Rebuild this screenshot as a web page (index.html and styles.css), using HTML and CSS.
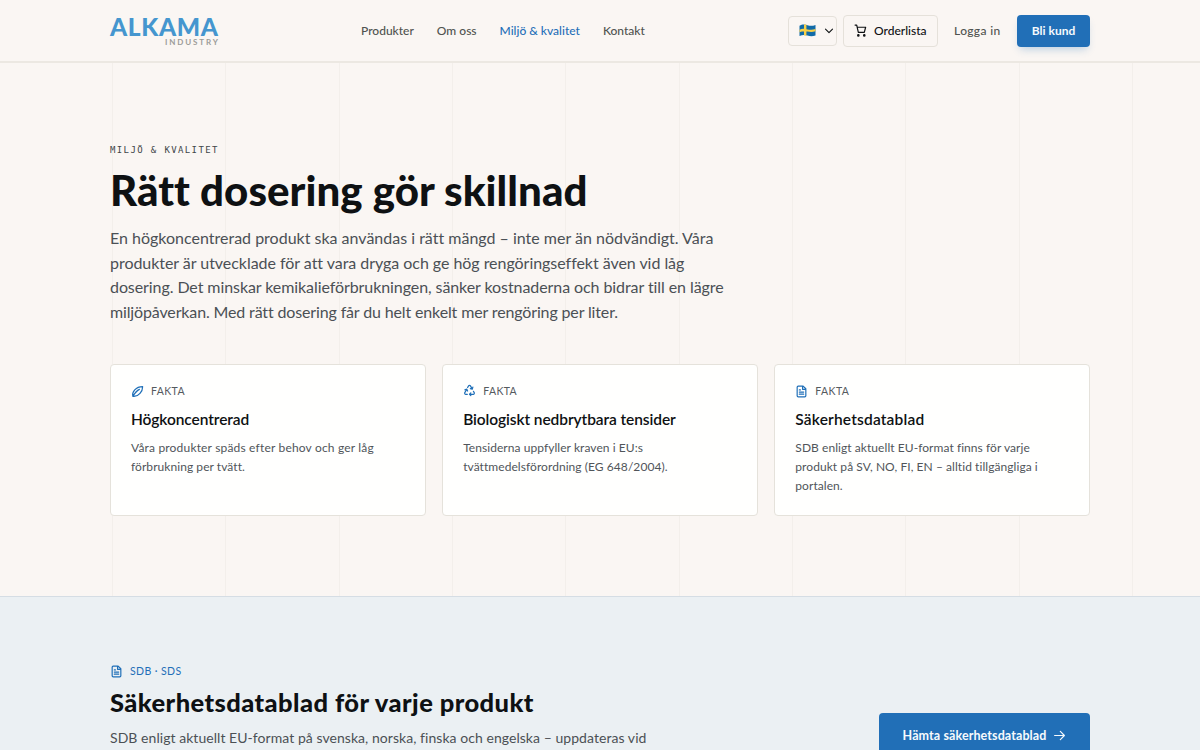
FILE: index.html
```html
<!DOCTYPE html>
<html lang="sv">

<head>
    <meta charset="utf-8">
    <title>Alkama Industry - Miljö & kvalitet</title>
    <link rel="stylesheet" href="styles.css">
</head>

<body>
    <header class="header">
        <div class="container header-inner">
            <a class="logo">
                <svg width="109" height="32" viewBox="0 0 109 32">
                    <text class="logo-name" x="0" y="20.500" textLength="108">ALKAMA</text>
                    <text class="logo-sub" x="55" y="29.500" textLength="53">INDUSTRY</text>
                </svg>
            </a>
            <nav class="nav">
                <a>Produkter</a>
                <a>Om oss</a>
                <a class="active">Miljö &amp; kvalitet</a>
                <a>Kontakt</a>
            </nav>
            <div class="actions">
                <button class="lang">
                    <svg width="17" height="13" viewBox="0 0 17 13">
                        <path d="M.5 1.8C3.5-.1 6 .6 8.5 1.3s5 .8 8-.3v10.4c-3 1.2-5.5.9-8 .2s-5-.9-8 .5z" fill="#116ba8" />
                        <path d="M5 .5h2.4v11H5zM.5 5.7C3.5 4.2 6 4.9 8.5 5.4s5 .7 8-.3v2.2c-3 1-5.5.8-8 .3s-5-.8-8 .6z" fill="#f7d048" />
                    </svg>
                    <svg class="icon" width="10" height="10" viewBox="0 0 10 10"><path d="M1.5 3.2 5 6.7l3.5-3.5" /></svg>
                </button>
                <button class="order">
                    <svg class="icon" width="13" height="13" viewBox="0 0 24 24"><circle cx="8" cy="21" r="1.3" /><circle cx="19" cy="21" r="1.3" /><path d="M2 2h3l3 13.5h11L21.5 6H6" /></svg>
                    <span>Orderlista</span>
                </button>
                <a class="login">Logga in</a>
                <a class="btn btn-small">Bli kund</a>
            </div>
        </div>
    </header>

    <section class="hero">
        <div class="container">
            <div class="eyebrow">MILJÖ &amp; KVALITET</div>
            <h1>Rätt dosering gör skillnad</h1>
            <p class="lead">
                En högkoncentrerad produkt ska användas i rätt mängd – inte mer än nödvändigt. Våra<br>
                <span class="snug">produkter är utvecklade för att vara dryga och ge hög rengöringseffekt även vid låg</span><br>
                <span class="tight">dosering. Det minskar kemikalieförbrukningen, sänker kostnaderna och bidrar till en lägre</span><br>
                <span class="tighter">miljöpåverkan. Med rätt dosering får du helt enkelt mer rengöring per liter.</span>
            </p>
            <div class="cards">
                <article class="card">
                    <div class="label">
                        <svg class="icon" width="13" height="13" viewBox="0 0 24 24"><path d="M3.5 21C1 13 9 3 21.5 3c0 8-7 19.5-18 18zM3.5 21C7 15 11 10 15.5 8" /></svg>
                        <span>FAKTA</span>
                    </div>
                    <h3>Högkoncentrerad</h3>
                    <p><span class="wide">Våra produkter späds efter behov och ger låg</span><br>förbrukning per tvätt.</p>
                </article>
                <article class="card">
                    <div class="label">
                        <svg class="icon icon-up" width="13" height="13" viewBox="0 0 24 24"><path d="M8 19H5a2 2 0 0 1-1.7-3L6.5 10.5M12 19h7a2 2 0 0 0 1.7-3l-1.5-2.500M14.5 16.5 12 19l2.5 2.5M8.5 13 7 9.5l-3.5 1.2M8.5 6.5l1.8-3a2 2 0 0 1 3.4 0l3.5 6M13.5 8.5l3.7 1 1-3.6" /></svg>
                        <span>FAKTA</span>
                    </div>
                    <h3>Biologiskt nedbrytbara tensider</h3>
                    <p>Tensiderna uppfyller kraven i EU:s<br>tvättmedelsförordning (EG 648/2004).</p>
                </article>
                <article class="card">
                    <div class="label">
                        <svg class="icon" width="13" height="13" viewBox="0 0 24 24"><path d="M15 2H6a2 2 0 0 0-2 2v16a2 2 0 0 0 2 2h12a2 2 0 0 0 2-2V7zM14 2v6h6M8 9h2M8 13h8M8 17h8" /></svg>
                        <span>FAKTA</span>
                    </div>
                    <h3 class="wide">Säkerhetsdatablad</h3>
                    <p>SDB enligt aktuellt EU-format finns för varje<br>produkt på SV, NO, FI, EN – alltid tillgängliga i<br>portalen.</p>
                </article>
            </div>
        </div>
    </section>

    <section class="sds">
        <div class="container sds-inner">
            <div>
                <div class="label label-blue">
                    <svg class="icon" width="13" height="13" viewBox="0 0 24 24"><path d="M15 2H6a2 2 0 0 0-2 2v16a2 2 0 0 0 2 2h12a2 2 0 0 0 2-2V7zM14 2v6h6M8 9h2M8 13h8M8 17h8" /></svg>
                    <span>SDB · SDS</span>
                </div>
                <h2>Säkerhetsdatablad för varje produkt</h2>
                <p class="sds-text">SDB enligt aktuellt EU-format på svenska, norska, finska och engelska – uppdateras vid</p>
            </div>
            <a class="btn btn-large">
                <span>Hämta säkerhetsdatablad</span>
                <svg class="icon" width="13" height="13" viewBox="0 0 24 24"><path d="M3 12h18M13.5 4.5 21 12l-7.5 7.5" /></svg>
            </a>
        </div>
    </section>
</body>

</html>
```
FILE: styles.css
```css
* {
    box-sizing: border-box;
}

body {
    margin: 0;
    height: 750px;
    overflow: hidden;
    background-color: #faf6f3;
    color: #0e1113;
    font-family: Lato, "Open Sans", sans-serif;
    font-variant-ligatures: none;
}

.container {
    width: 980px;
    margin: 0 auto;
}

.header {
    height: 63px;
    border-bottom: 2px solid #ece8e2;
}

.header-inner {
    display: flex;
    align-items: center;
    height: 61px;
}

.logo {
    width: 251px;
    height: 32px;
}

.logo svg {
    display: block;
    overflow: visible;
}

.logo-name {
    fill: #4596cf;
    font-size: 24.5px;
    font-weight: 900;
}

.logo-sub {
    fill: #9c9c98;
    font-size: 8px;
    font-weight: 700;
}

.nav {
    display: flex;
    gap: 23px;
    color: #50534f;
    font-size: 12px;
    font-weight: 500;
    white-space: nowrap;
}

.active {
    color: #1f6fb8;
}

.actions {
    display: flex;
    align-items: center;
    margin-left: auto;
    font-size: 12px;
    font-weight: 500;
    white-space: nowrap;
}

.lang,
.order {
    display: flex;
    align-items: center;
    background: none;
    border: 1px solid #e5e1da;
    border-radius: 4px;
    font: inherit;
    color: #0e1113;
}

.lang {
    width: 49px;
    height: 30px;
    margin-right: 6px;
    padding: 0 2px 0 10px;
    justify-content: space-between;
}

.order {
    width: 95px;
    height: 32px;
    margin-right: 16px;
    padding: 0 0 0 10px;
    gap: 7px;
}

.login {
    width: 63px;
    letter-spacing: 0.35px;
    color: #50534f;
}

.icon {
    display: block;
    flex: none;
    fill: none;
    stroke: currentColor;
    stroke-width: 2.2;
    stroke-linecap: round;
    stroke-linejoin: round;
}

.icon-up {
    margin-bottom: 2px;
}

.lang .icon {
    stroke-width: 1.1;
}

.btn {
    display: flex;
    align-items: center;
    justify-content: center;
    background-color: #216fb7;
    border-radius: 4px;
    color: #f6fafd;
    font-weight: 700;
}

.btn-small {
    width: 73px;
    height: 32px;
    box-shadow: 0 5px 9px -3px rgba(33, 111, 183, 0.3);
}

.hero {
    height: 533px;
    padding-top: 80px;
    background: repeating-linear-gradient(90deg, #f3efeb 0 1px, transparent 1px 113.35px) 112px 0 no-repeat;
}

.eyebrow {
    height: 14px;
    font-family: "DejaVu Sans Mono", monospace;
    font-size: 9px;
    line-height: 14px;
    letter-spacing: 1.38px;
    color: #41464a;
}

h1 {
    margin: 9px 0 0;
    height: 48px;
    font-size: 42px;
    line-height: 48px;
    font-weight: 900;
    letter-spacing: 0.05px;
    white-space: nowrap;
}

.lead {
    margin: 12px 0 0;
    font-size: 16px;
    line-height: 24.5px;
    color: #4b5055;
    white-space: nowrap;
}

.snug {
    letter-spacing: -0.04px;
}

.tight {
    letter-spacing: -0.08px;
}

.tighter {
    letter-spacing: -0.14px;
}

.cards {
    display: grid;
    grid-template-columns: repeat(3, 1fr);
    gap: 16.5px;
    margin-top: 40px;
}

.card {
    height: 152px;
    padding: 19px 20px;
    background-color: #fffffe;
    border: 1px solid #e5e2db;
    border-radius: 4px;
    white-space: nowrap;
}

.label {
    display: flex;
    align-items: center;
    gap: 7px;
    height: 14px;
    font-size: 10.5px;
    letter-spacing: 0.4px;
    color: #555a5e;
}

.label .icon {
    color: #1f6fb8;
}

.card h3 {
    margin: 11px 0 0;
    font-size: 15.5px;
    line-height: 20px;
    font-weight: 600;
    letter-spacing: -0.08px;
}

.card p {
    margin: 9px 0 0;
    font-size: 12px;
    line-height: 19px;
    letter-spacing: 0.06px;
    color: #50555a;
}

.card .wide {
    letter-spacing: 0.18px;
}

.sds {
    height: 154px;
    padding-top: 67px;
    background-color: #ebf0f3;
    border-top: 1px solid #d5dde4;
}

.sds-inner {
    display: flex;
    justify-content: space-between;
}

.label-blue {
    color: #1f6fb8;
}

h2 {
    margin: 8px 0 0;
    font-size: 25.5px;
    line-height: 32px;
    font-weight: 900;
    letter-spacing: 0.43px;
    white-space: nowrap;
}

.sds-text {
    margin: 9px 0 0;
    font-size: 14px;
    line-height: 22px;
    letter-spacing: 0.05px;
    color: #4b5055;
    white-space: nowrap;
}

.btn-large {
    width: 211px;
    height: 44px;
    margin-top: 49px;
    gap: 7px;
    font-size: 12.5px;
    letter-spacing: 0.1px;
}
```
